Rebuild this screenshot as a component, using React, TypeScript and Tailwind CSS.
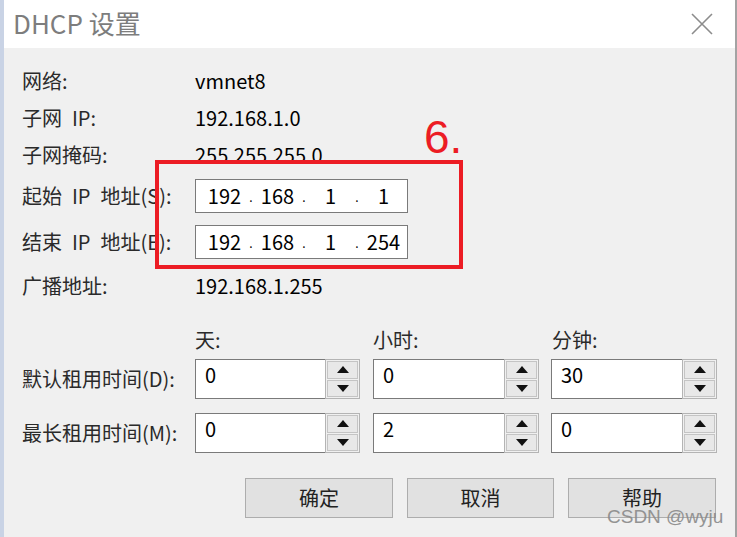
import React from "react";

const font = { fontFamily: '"Noto Sans CJK SC", "Noto Sans", sans-serif' };

function CloseIcon() {
    return (
        <svg width="22" height="22" viewBox="0 0 22 22" className="mr-[2px]">
            <path d="M1 1 L21 21 M21 1 L1 21" stroke="#8c8c8c" strokeWidth="1.6" fill="none" />
        </svg>
    );
}

function InfoRow({ label, value, h }: { label: string; value: string; h: string }) {
    return (
        <div className={`flex items-center ${h}`}>
            <div className="w-[173px] text-[#2a2a2a] whitespace-pre">{label}</div>
            <div className="text-black">{value}</div>
        </div>
    );
}

function IpBox({ parts }: { parts: string[] }) {
    return (
        <div className="flex items-center h-[34px] w-[213px] border border-[#7a7a7a] bg-white pl-[5px] text-black">
            {parts.map((p, i) => (
                <React.Fragment key={i}>
                    {i > 0 && <span className="w-[6px] text-center text-[12px] leading-none self-end mb-[9px]">.</span>}
                    <span className="w-[47px] text-center">{p}</span>
                </React.Fragment>
            ))}
        </div>
    );
}

function Arrow({ up }: { up?: boolean }) {
    return (
        <svg width="12" height="7" viewBox="0 0 12 7">
            {up ? <path d="M0 7 L6 0 L12 7 Z" fill="#111" /> : <path d="M0 0 L6 7 L12 0 Z" fill="#111" />}
        </svg>
    );
}

function Spinner({ value, w }: { value: string; w: string }) {
    return (
        <div className={`flex h-[40px] ${w}`}>
            <div className="flex-1 border border-[#7a7a7a] border-r-0 bg-white pl-[9px] pt-[1px] text-black leading-[28px]">
                {value}
            </div>
            <div className="w-[35px] flex flex-col border border-[#b4b4b4] bg-[#f0f0f0] p-[1px] gap-[1px]">
                <div className="flex-1 flex items-center justify-center border border-[#c4c4c4] bg-[#e8e8e8]">
                    <Arrow up />
                </div>
                <div className="flex-1 flex items-center justify-center border border-[#c4c4c4] bg-[#e8e8e8]">
                    <Arrow />
                </div>
            </div>
        </div>
    );
}

function Btn({ label, w }: { label: string; w: string }) {
    return (
        <div className={`h-[40px] ${w} flex items-center justify-center border border-[#adadad] bg-[#e1e1e1] text-[#222]`}>
            {label}
        </div>
    );
}

export default function App() {
    return (
        <div className="flex w-[737px] h-[537px] text-[20px]" style={font}>
            <div className="w-[4px] bg-[#c9d3e5]" />
            <div className="flex-1 flex flex-col border-r-2 border-[#a3a3a3]">
                <div className="h-[48px] bg-white flex items-center justify-between pl-[9px] pr-[20px]">
                    <span className="text-[26px] text-[#7d7d7d] mb-[3px]">DHCP 设置</span>
                    <CloseIcon />
                </div>

                <div className="flex-1 bg-[#f0f0f0] relative pl-[18px] pt-[14px]">
                    <InfoRow label="网络:" value="vmnet8" h="h-[37px]" />
                    <InfoRow label={"子网\u2002IP:"} value="192.168.1.0" h="h-[37px]" />
                    <InfoRow label="子网掩码:" value="255.255.255.0" h="h-[38px]" />
                    <div className="flex items-center h-[43px]">
                        <div className="w-[173px] text-[#2a2a2a] whitespace-pre">{"起始\u2002IP\u2002地址(S):"}</div>
                        <IpBox parts={["192", "168", "1", "1"]} />
                    </div>
                    <div className="flex items-center h-[49px]">
                        <div className="w-[173px] text-[#2a2a2a] whitespace-pre">{"结束\u2002IP\u2002地址(E):"}</div>
                        <IpBox parts={["192", "168", "1", "254"]} />
                    </div>
                    <InfoRow label="广播地址:" value="192.168.1.255" h="h-[40px]" />

                    <div className="flex items-center h-[36px] mt-[16px] text-[#2a2a2a]">
                        <div className="w-[173px]" />
                        <div className="w-[178px]">天:</div>
                        <div className="w-[179px]">小时:</div>
                        <div>分钟:</div>
                    </div>
                    <div className="flex items-center mt-[1px]">
                        <div className="w-[173px] text-[#2a2a2a] whitespace-nowrap">默认租用时间(D):</div>
                        <Spinner value="0" w="w-[165px]" />
                        <div className="w-[13px]" />
                        <Spinner value="0" w="w-[166px]" />
                        <div className="w-[12px]" />
                        <Spinner value="30" w="w-[166px]" />
                    </div>
                    <div className="flex items-center mt-[14px]">
                        <div className="w-[173px] text-[#2a2a2a] whitespace-nowrap">最长租用时间(M):</div>
                        <Spinner value="0" w="w-[165px]" />
                        <div className="w-[13px]" />
                        <Spinner value="2" w="w-[166px]" />
                        <div className="w-[12px]" />
                        <Spinner value="0" w="w-[166px]" />
                    </div>

                    <div className="flex justify-end gap-[14px] mt-[25px] pr-[19px]">
                        <Btn label="确定" w="w-[148px]" />
                        <Btn label="取消" w="w-[147px]" />
                        <Btn label="帮助" w="w-[148px]" />
                    </div>

                    {/* annotation overlay */}
                    <div className="absolute left-[151px] top-[112px] w-[308px] h-[109px] border-4 border-[#ec1c24]" />
                    <div className="absolute left-[420px] top-[66px] text-[46px] leading-none text-[#ec1c24]" style={{ fontFamily: '"Liberation Sans", sans-serif' }}>
                        6.
                    </div>
                    <div className="absolute left-[603px] top-[455px] text-[19px] text-[#8a8a8a] opacity-90" style={{ fontFamily: '"Liberation Sans", sans-serif' }}>
                        CSDN @wyju
                    </div>
                </div>
            </div>
        </div>
    );
}
